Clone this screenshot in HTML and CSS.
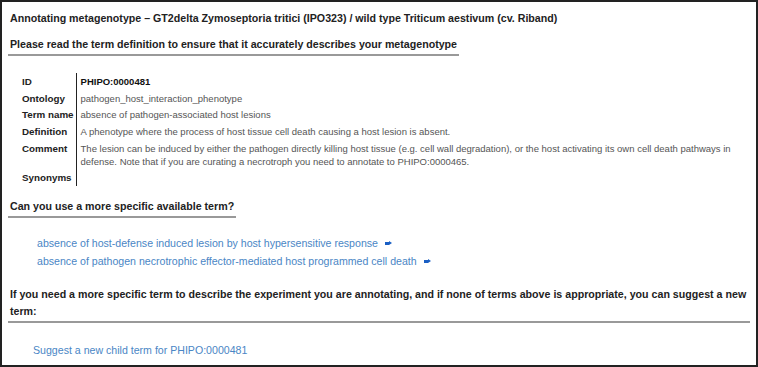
FILE: index.html
```html
<!DOCTYPE html>
<html lang="en">
<head>
  <meta charset="UTF-8">
  <title>Annotating metagenotype</title>
  <link rel="stylesheet" href="styles.css">
</head>
<body>
  <div class="frame">
    <h1 class="page-title">Annotating metagenotype – GT2delta Zymoseptoria tritici (IPO323) / wild type Triticum aestivum (cv. Riband)</h1>

    <h2 class="section-title short">Please read the term definition to ensure that it accurately describes your metagenotype</h2>

    <table class="term-details">
      <tr><th>ID</th><td class="term-id">PHIPO:0000481</td></tr>
      <tr><th>Ontology</th><td>pathogen_host_interaction_phenotype</td></tr>
      <tr><th>Term name</th><td>absence of pathogen-associated host lesions</td></tr>
      <tr><th>Definition</th><td>A phenotype where the process of host tissue cell death causing a host lesion is absent.</td></tr>
      <tr><th>Comment</th><td>The lesion can be induced by either the pathogen directly killing host tissue (e.g. cell wall degradation), or the host activating its own cell death pathways in defense. Note that if you are curating a necrotroph you need to annotate to PHIPO:0000465.</td></tr>
      <tr><th>Synonyms</th><td></td></tr>
    </table>

    <h2 class="section-title specific">Can you use a more specific available term?</h2>

    <ul class="child-terms">
      <li><a href="#">absence of host-defense induced lesion by host hypersensitive response</a> <span class="arrow"></span></li>
      <li><a href="#">absence of pathogen necrotrophic effector-mediated host programmed cell death</a> <span class="arrow"></span></li>
    </ul>

    <h2 class="section-title wide">If you need a more specific term to describe the experiment you are annotating, and if none of terms above is appropriate, you can suggest a new term:</h2>

    <div class="suggest">
      <a href="#">Suggest a new child term for PHIPO:0000481</a>
    </div>
  </div>
</body>
</html>
```

FILE: styles.css
```css
html, body {
  margin: 0;
  padding: 0;
  background: white;
}
body {
  font-family: 'Liberation Sans', Arial, sans-serif;
  color: #222;
}
.frame {
  box-sizing: border-box;
  width: 758px;
  height: 367px;
  border: 2px solid #222;
  padding: 6px 6px 0 6px;
}
.page-title {
  font-size: 10.65px;
  font-weight: bold;
  margin: 3px 0 0 2px;
  line-height: 14px;
}
.section-title {
  font-size: 10.65px;
  font-weight: bold;
  line-height: 17px;
  margin: 0;
  padding: 0 2px 1px 2px;
  border-bottom: 2px solid #999;
  display: inline-block;
}
.section-title.short {
  margin-top: 11px;
}
.section-title.specific {
  margin-top: 12px;
}
.section-title.wide {
  display: block;
  margin-top: 16px;
}
.term-details {
  border-collapse: collapse;
  margin: 17px 0 0 12px;
}
.term-details th {
  text-align: left;
  font-weight: bold;
  font-size: 9.8px;
  color: #222;
  padding: 1.85px 2px 1.85px 2px;
  border-right: 1px solid #222;
  vertical-align: top;
  white-space: nowrap;
  line-height: 13px;
}
.term-details td {
  color: #555;
  font-size: 9.5px;
  padding: 1.85px 4px 1.85px 4px;
  vertical-align: top;
  line-height: 13px;
}
.term-details td.term-id {
  color: #111;
  font-weight: bold;
}
.child-terms {
  list-style: none;
  margin: 16px 0 0 29px;
  padding: 0;
  font-size: 10.6px;
  line-height: 18px;
}
a {
  color: #4a86c5;
  text-decoration: none;
}
.arrow {
  display: inline-block;
  width: 7px;
  height: 5px;
  margin-left: 4px;
  position: relative;
  top: -1px;
  background: linear-gradient(#1a5fc4, #1a5fc4) left center / 4px 3px no-repeat;
}
.arrow::after {
  content: '';
  position: absolute;
  right: 0;
  top: 0;
  border-left: 3px solid #1a5fc4;
  border-top: 2.5px solid transparent;
  border-bottom: 2.5px solid transparent;
}
.suggest {
  margin: 21px 0 0 25px;
  font-size: 10.6px;
}
```
